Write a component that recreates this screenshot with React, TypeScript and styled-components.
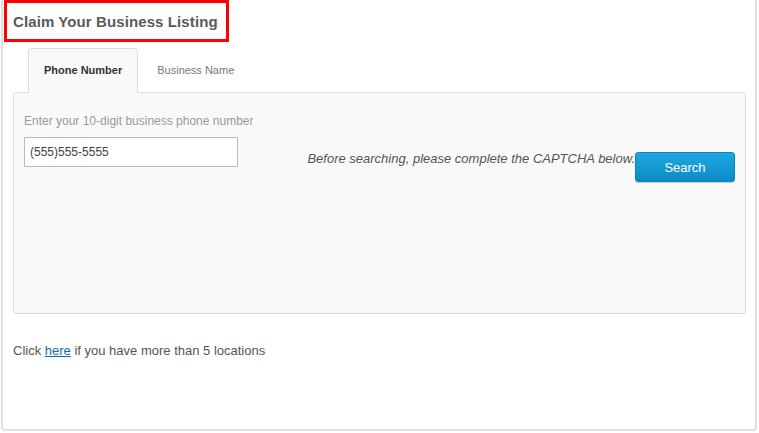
import styled, { createGlobalStyle } from 'styled-components';

const GlobalStyle = createGlobalStyle`
    body {
        margin: 0;
        font-family: "Liberation Sans", Arial, sans-serif;
        background: #fff;
    }
`;

const tabs = ['Phone Number', 'Business Name'];

const App = () => {
    return (
        <>
            <GlobalStyle />
            <Card>
                <Header>
                    <Title>Claim Your Business Listing</Title>
                </Header>
                <Body>
                    <TabList>
                        {tabs.map((tab, i) => (
                            <Tab key={tab} $active={i === 0}>
                                {tab}
                            </Tab>
                        ))}
                    </TabList>
                    <Panel>
                        <FormRow>
                            <Field>
                                <Label htmlFor="phone">
                                    Enter your 10-digit business phone number
                                </Label>
                                <PhoneInput
                                    id="phone"
                                    type="text"
                                    defaultValue="(555)555-5555"
                                />
                            </Field>
                            <SearchGroup>
                                <Hint>
                                    Before searching, please complete the CAPTCHA below.
                                </Hint>
                                <SearchButton type="button">Search</SearchButton>
                            </SearchGroup>
                        </FormRow>
                    </Panel>
                    <Footer>
                        Click <Link href="#">here</Link> if you have more than 5 locations
                    </Footer>
                </Body>
            </Card>
        </>
    );
};

export default App;

const Card = styled.div`
    box-sizing: border-box;
    width: 756px;
    height: 431px;
    margin-left: 1px;
    border: 2px solid #dde1e6;
    border-top: none;
    border-radius: 0 0 4px 4px;
`;

const Header = styled.div`
    padding-left: 1px;
`;

const Title = styled.h2`
    box-sizing: border-box;
    width: 225px;
    height: 42px;
    margin: 0;
    padding: 2px 0 0 6px;
    border: 3px solid #ff0000;
    font-size: 15px;
    font-weight: 700;
    letter-spacing: 0.1px;
    line-height: 34px;
    color: #5a5a5a;
`;

const Body = styled.div`
    padding: 0 9px 0 10px;
`;

const TabList = styled.div`
    display: flex;
    margin-top: 6px;
    padding-left: 15px;
`;

const Tab = styled.div<{ $active?: boolean }>`
    position: relative;
    z-index: 1;
    box-sizing: border-box;
    height: 45px;
    margin-bottom: -1px;
    padding: ${(p) => (p.$active ? '0 15px' : '0 18px')};
    min-width: ${(p) => (p.$active ? '110px' : 'auto')};
    text-align: center;
    border: 1px solid ${(p) => (p.$active ? '#ddd' : 'transparent')};
    border-bottom: none;
    border-radius: 4px 4px 0 0;
    background: ${(p) => (p.$active ? '#f9f9f9' : 'transparent')};
    font-size: 11px;
    font-weight: ${(p) => (p.$active ? 700 : 400)};
    line-height: 43px;
    color: ${(p) => (p.$active ? '#333' : '#777')};
`;

const Panel = styled.div`
    box-sizing: border-box;
    height: 222px;
    padding: 20px 10px 10px;
    border: 1px solid #ddd;
    border-radius: 3px;
    background: #f9f9f9;
`;

const FormRow = styled.div`
    display: flex;
    align-items: flex-start;
`;

const Field = styled.div`
    display: flex;
    flex-direction: column;
    gap: 8px;
`;

const Label = styled.label`
    font-size: 12px;
    line-height: 16px;
    color: #999;
`;

const PhoneInput = styled.input`
    box-sizing: border-box;
    width: 214px;
    height: 30px;
    padding: 0 5px;
    border: 1px solid #bbb;
    border-radius: 0;
    background: #fff;
    font-family: "Liberation Sans", Arial, sans-serif;
    font-size: 12px;
    color: #444;
    outline: none;
`;

const SearchGroup = styled.div`
    display: flex;
    align-items: flex-start;
    margin-left: auto;
    margin-top: 38px;
`;

const Hint = styled.p`
    margin: 0;
    font-size: 13px;
    font-style: italic;
    line-height: 15px;
    color: #555;
`;

const SearchButton = styled.button`
    box-sizing: border-box;
    width: 100px;
    height: 30px;
    margin-top: 1px;
    border: 1px solid #0a88c2;
    border-radius: 3px;
    background: linear-gradient(to bottom, #1ea8de, #0a8bc7);
    box-shadow: 0 1px 1px rgba(0, 0, 0, 0.2);
    font-family: "Liberation Sans", Arial, sans-serif;
    font-size: 13px;
    color: #fff;
    cursor: pointer;
`;

const Footer = styled.p`
    margin: 29px 0 0;
    font-size: 13px;
    line-height: 16px;
    color: #555;
`;

const Link = styled.a`
    color: #0b6fa4;
    text-decoration: underline;
`;
